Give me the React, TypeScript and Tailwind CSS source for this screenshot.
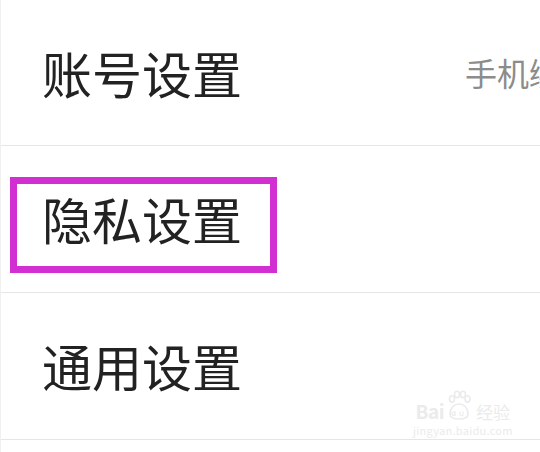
const rows = [
  { label: "账号设置", value: "手机绑定", h: "h-[146px]" },
  { label: "隐私设置", h: "h-[147px]" },
  { label: "通用设置", h: "h-[147px]" },
]

function Row({ label, value, h }: { label: string; value?: string; h: string }) {
  return (
    <div className={`${h} flex items-center border-b border-[#e6e6e6] pl-[41px] pb-[2px] overflow-hidden`}>
      <span className="shrink-0 text-[50px] leading-none text-[#222222] whitespace-nowrap">{label}</span>
      {value && (
        <span className="shrink-0 ml-[223px] text-[32px] leading-none text-[#8c8c8c] whitespace-nowrap">
          {value}
        </span>
      )}
    </div>
  )
}

function Watermark() {
  return (
    <div className="absolute left-[412px] top-[390px] flex flex-col items-center text-[#ebebeb] pointer-events-none select-none">
      <div className="flex items-end gap-[2px] leading-none">
        <span className="text-[19px] font-bold tracking-tight">Bai</span>
        <svg width="26" height="30" viewBox="0 0 26 30" fill="none" stroke="currentColor" strokeWidth="1.6">
          <ellipse cx="6" cy="9" rx="2.5" ry="3.2" />
          <ellipse cx="11" cy="4.5" rx="2.5" ry="3.2" />
          <ellipse cx="17" cy="4.5" rx="2.5" ry="3.2" />
          <ellipse cx="21.5" cy="9" rx="2.5" ry="3.2" />
          <path d="M4 24c0-6 4-10 9-10s9 4 9 10c0 3-2 5-9 5s-9-2-9-5z" />
          <path d="M9 21v5M9 23.5a1.6 1.6 0 1 0 0 0.1M14 21.5v3a1.5 1.5 0 0 0 3 0v-3" strokeWidth="1.1" />
        </svg>
        <span className="text-[17px] ml-[2px]">经验</span>
      </div>
      <span className="text-[11px] leading-none mt-[5px] tracking-wide">jingyan.baidu.com</span>
    </div>
  )
}

export default function App() {
  return (
    <div
      className="relative w-[540px] h-[452px] overflow-hidden bg-white border-l border-[#f0f0f0]"
      style={{ fontFamily: '"Noto Sans CJK SC", "Noto Sans", sans-serif' }}
    >
      {rows.map((r) => (
        <Row key={r.label} {...r} />
      ))}
      <div className="absolute left-[9px] top-[177px] w-[267px] h-[96px] border-[7px] border-[#d22fd2]" />
      <Watermark />
    </div>
  )
}
